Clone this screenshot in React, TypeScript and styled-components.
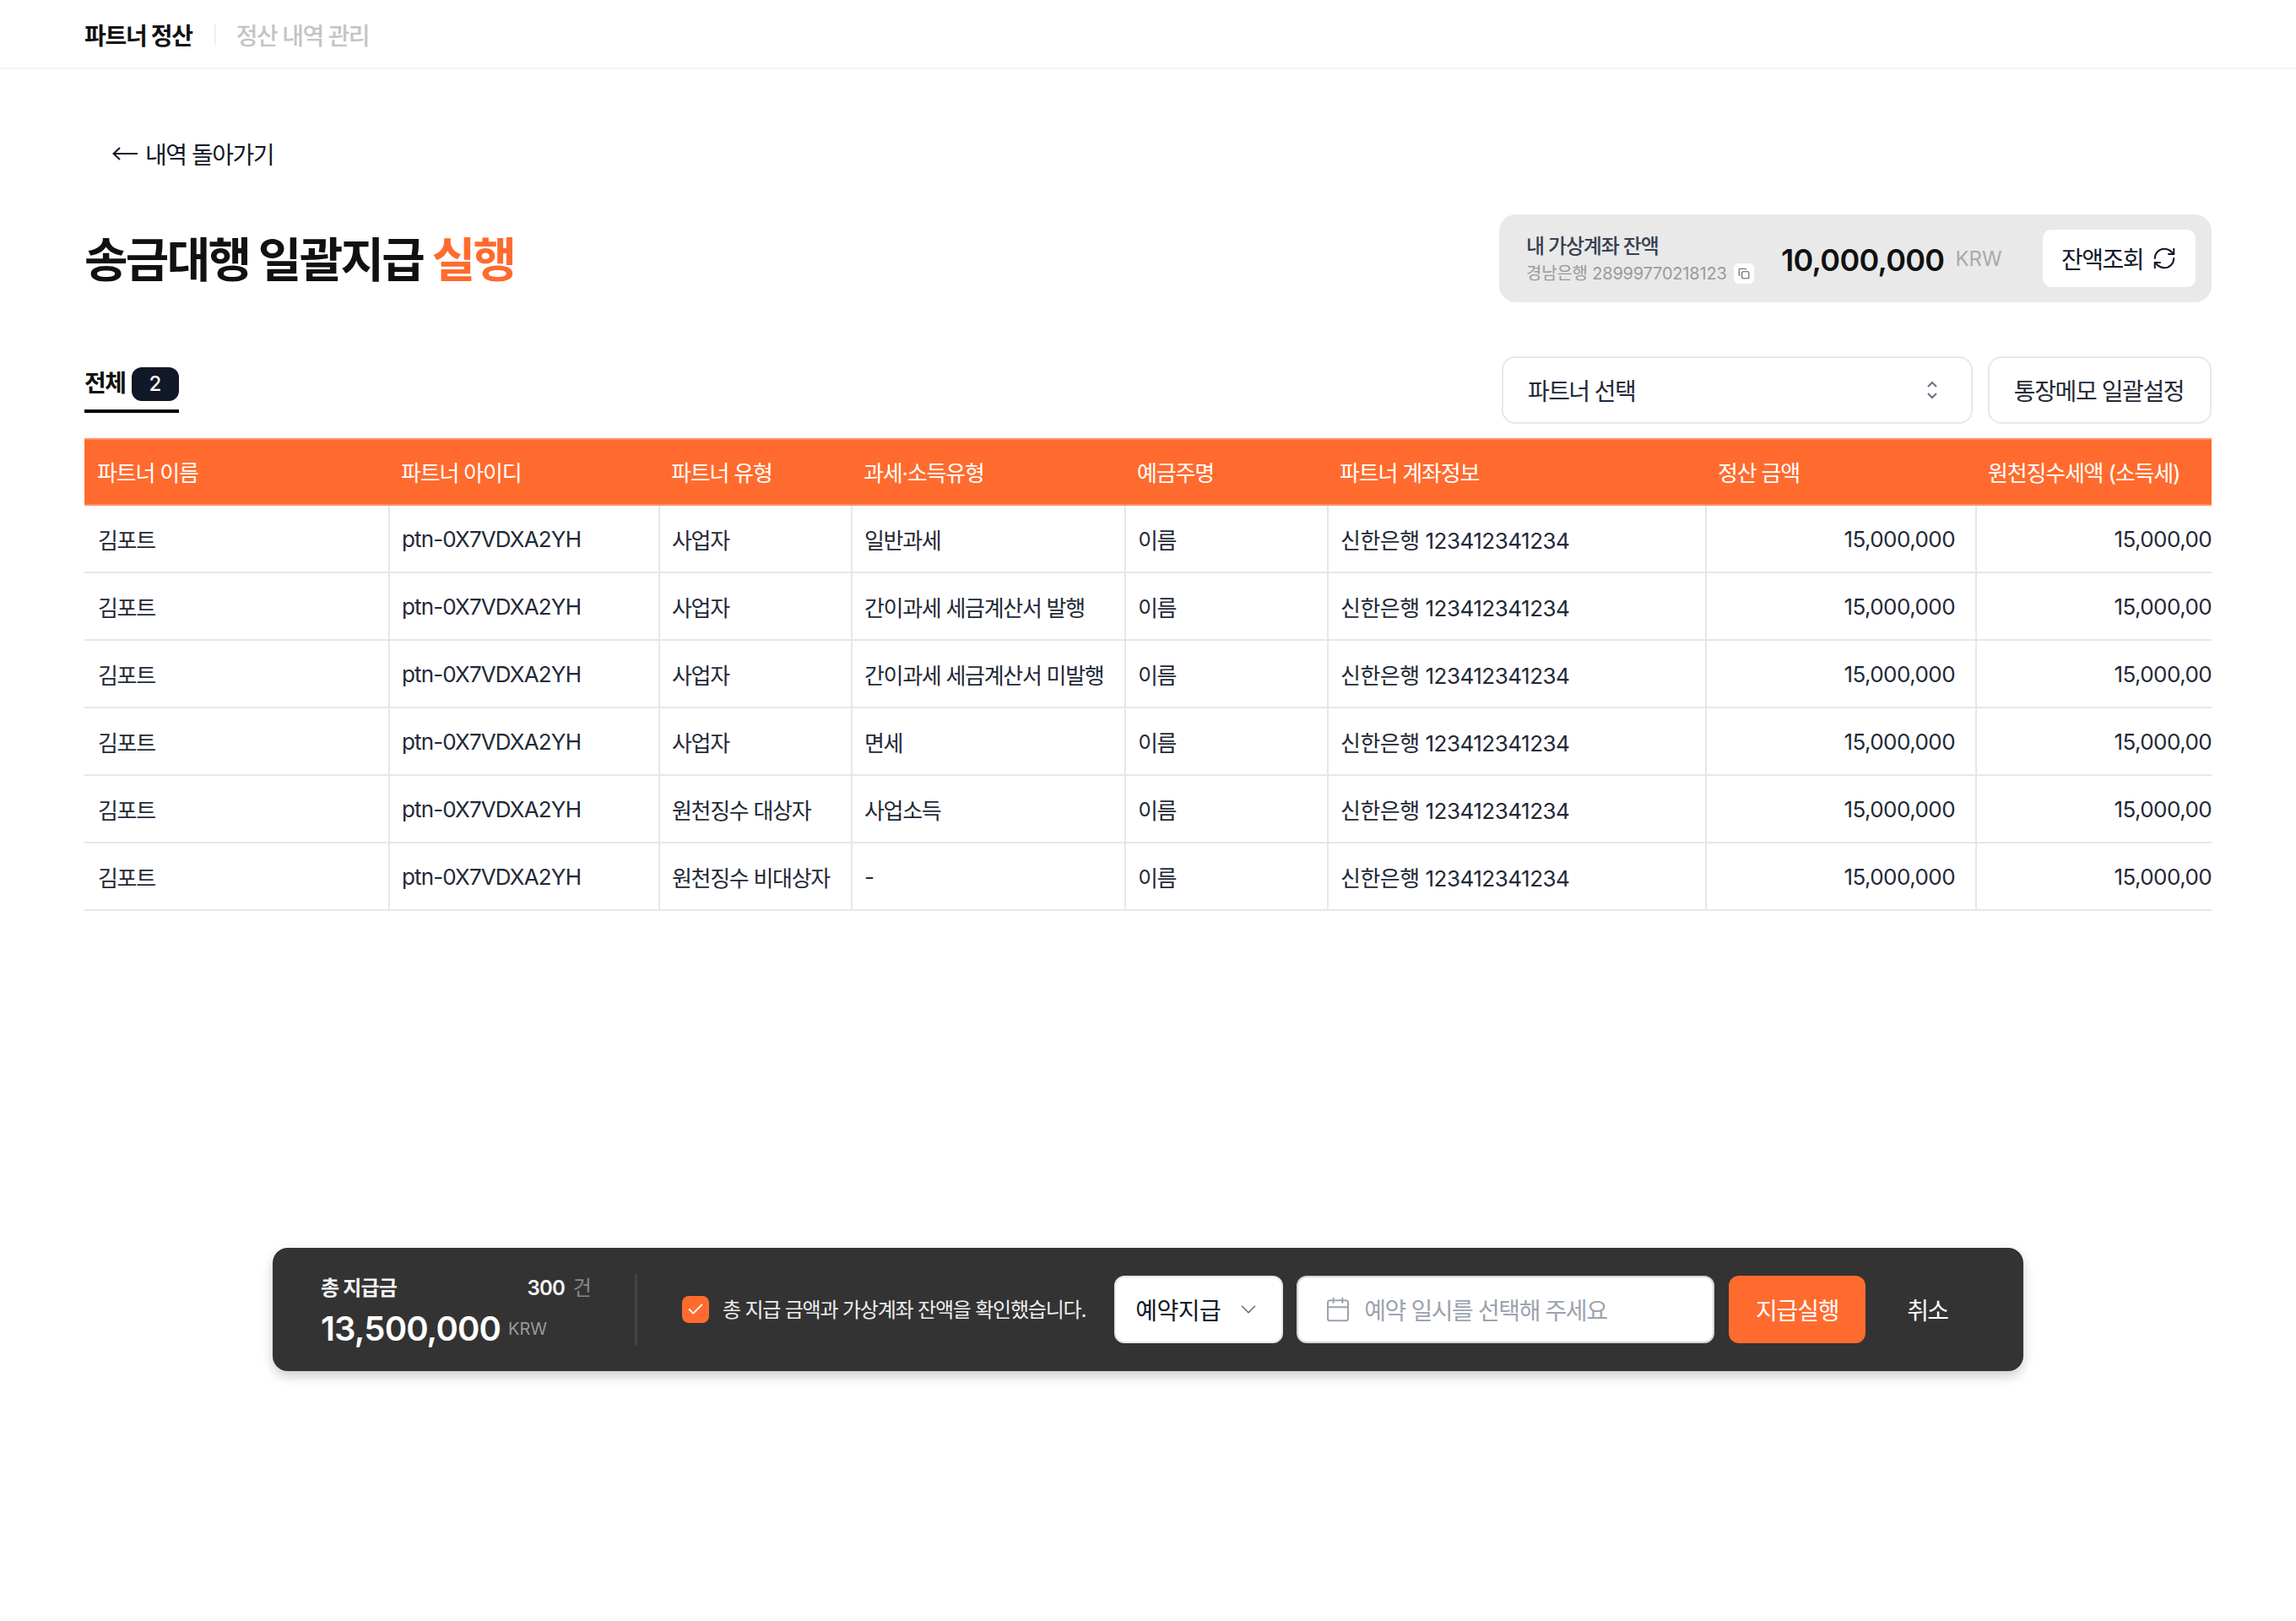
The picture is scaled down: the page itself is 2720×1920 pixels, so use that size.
import React from "react";
import styled, { createGlobalStyle } from "styled-components";
import { Calendar, Check, ChevronDown, Copy, RefreshCw } from "lucide-react";

const ORANGE = "#ff6b2e";

const GlobalStyle = createGlobalStyle`
    html, body {
        margin: 0;
        padding: 0;
        background: #fff;
    }
    body {
        font-family: Inter, "Noto Sans CJK KR", sans-serif;
        color: #111827;
    }
    * {
        box-sizing: border-box;
    }
`;

const Page = styled.div`
    width: 2720px;
    height: 1920px;
    display: flex;
    flex-direction: column;
    overflow: hidden;
`;

const TopBar = styled.header`
    height: 82px;
    padding: 2px 100px 0;
    display: flex;
    align-items: center;
    border-bottom: 2px solid #f5f5f5;
`;

const TopTitle = styled.span`
    font-size: 28px;
    font-weight: 700;
    letter-spacing: -1.3px;
    color: #111;
`;

const TopDivider = styled.span`
    width: 2px;
    height: 24px;
    margin: 0 24px 0 26px;
    background: #eee;
`;

const TopSub = styled.span`
    font-size: 28px;
    font-weight: 500;
    letter-spacing: -1.5px;
    color: #c4c4c4;
`;

const Main = styled.main`
    padding: 0 100px;
    display: flex;
    flex-direction: column;
`;

const BackLink = styled.a`
    height: 40px;
    margin: 80px 0 0 33px;
    display: flex;
    align-items: center;
    gap: 9px;
    font-size: 28px;
    letter-spacing: -1.5px;
    color: #111827;
`;

const TitleRow = styled.div`
    margin-top: 52px;
    display: flex;
    align-items: center;
    justify-content: space-between;
`;

const Title = styled.h1`
    margin: 0 0 6px;
    font-size: 56px;
    font-weight: 700;
    letter-spacing: -2.7px;
    color: #111;

    em {
        font-style: normal;
        color: ${ORANGE};
    }
`;

const BalanceCard = styled.div`
    width: 844px;
    height: 104px;
    padding: 0 19px 0 32px;
    display: flex;
    align-items: center;
    border-radius: 20px;
    background: #e9e9e9;
`;

const AccountInfo = styled.div`
    width: 302px;
    display: flex;
    flex-direction: column;
    gap: 2px;
`;

const AccountLabel = styled.div`
    font-size: 24px;
    line-height: 34px;
    font-weight: 500;
    letter-spacing: -1.2px;
    color: #374151;
`;

const AccountNumber = styled.div`
    display: flex;
    align-items: center;
    font-size: 20px;
    line-height: 26px;
    color: #9a9a9a;
    letter-spacing: -0.2px;
    gap: 8px;
`;

const CopyChip = styled.span`
    width: 24px;
    height: 24px;
    display: flex;
    align-items: center;
    justify-content: center;
    border-radius: 6px;
    background: #fff;
    color: #555;
`;

const BalanceAmount = styled.span`
    padding-top: 3px;
    font-size: 36px;
    font-weight: 600;
    letter-spacing: -0.7px;
    color: #111;
`;

const Currency = styled.span<{ $size: number; $color: string; $lift?: number }>`
    margin-left: ${p => p.$size === 24 ? 13 : 9}px;
    font-size: ${p => p.$size}px;
    font-weight: 400;
    letter-spacing: 0;
    vertical-align: ${p => p.$lift ?? 0}px;
    color: ${p => p.$color};
`;

const RefreshButton = styled.button`
    width: 181px;
    height: 68px;
    margin-left: auto;
    padding: 0;
    display: flex;
    align-items: center;
    justify-content: center;
    gap: 10px;
    border: 0;
    border-radius: 10px;
    background: #fff;
    font: inherit;
    font-size: 28px;
    letter-spacing: -1.5px;
    color: #111827;
`;

const TabRow = styled.div`
    margin-top: 64px;
    height: 80px;
    display: flex;
    align-items: flex-start;
`;

const Tab = styled.div`
    width: 112px;
    height: 67px;
    margin-right: auto;
    padding-top: 13px;
    display: flex;
    align-items: flex-start;
    justify-content: space-between;
    border-bottom: 4px solid #000;
    font-size: 28px;
    line-height: 38px;
    font-weight: 700;
    letter-spacing: -1.6px;
    color: #111;
    white-space: nowrap;
`;

const TabCount = styled.span`
    width: 56px;
    height: 40px;
    display: flex;
    align-items: center;
    justify-content: center;
    border-radius: 12px;
    background: #111827;
    color: #fff;
    font-size: 24px;
    font-weight: 500;
    letter-spacing: 0;
`;

const PartnerSelect = styled.div`
    width: 558px;
    height: 80px;
    padding: 0 38px 0 29px;
    display: flex;
    align-items: center;
    justify-content: space-between;
    border: 2px solid #e8e8e8;
    border-radius: 16px;
    font-size: 28px;
    letter-spacing: -1.6px;
    color: #1f2937;
`;

const MemoButton = styled.button`
    width: 265px;
    height: 80px;
    margin-left: 18px;
    padding: 0 2px 0 0;
    border: 2px solid #e8e8e8;
    border-radius: 16px;
    background: #fff;
    font: inherit;
    font-size: 28px;
    letter-spacing: -1.4px;
    color: #1f2937;
`;

const TableClip = styled.div`
    margin-top: 17px;
    width: 2520px;
    overflow: hidden;
`;

const Table = styled.table`
    width: 2560px;
    table-layout: fixed;
    border-collapse: separate;
    border-spacing: 0;
`;

const HeadCell = styled.th`
    height: 80px;
    padding: 0 15px 2px;
    background: ${ORANGE};
    border-top: 2px solid #fb9068;
    border-bottom: 2px solid #fb9068;
    color: #fff;
    font-size: 26px;
    font-weight: 400;
    letter-spacing: -1.2px;
    text-align: left;
    white-space: nowrap;
`;

const Cell = styled.td<{ $right?: boolean; $spacing?: number }>`
    height: 80px;
    padding: ${p => p.$right ? "0 24px 0 0" : "0 0 0 14px"};
    border-bottom: 2px solid #e5e7eb;
    border-left: 2px solid #e5e7eb;
    font-size: 26px;
    letter-spacing: ${p => p.$spacing ?? -1.3}px;
    color: #1f2937;
    text-align: ${p => p.$right ? "right" : "left"};
    white-space: nowrap;

    &:first-child {
        border-left: 0;
        padding-left: 16px;
    }
`;

const ActionBar = styled.div`
    width: 2074px;
    height: 146px;
    margin: 399px auto 0;
    padding: 0 56px 0 57px;
    display: flex;
    align-items: center;
    border-radius: 18px;
    background: #333;
    box-shadow: 0 6px 14px rgba(0, 0, 0, 0.2);
`;

const TotalBlock = styled.div`
    width: 320px;
    padding-top: 9px;
    display: flex;
    flex-direction: column;
`;

const TotalTop = styled.div`
    display: flex;
    align-items: center;
    justify-content: space-between;
    font-size: 24px;
    line-height: 32px;
    font-weight: 600;
    letter-spacing: -0.9px;
    color: #f3f3f3;

    small {
        margin-left: 10px;
        font-size: 24px;
        font-weight: 400;
        color: #888;
    }
`;

const TotalBottom = styled.div`
    margin-top: 4px;
    font-size: 40px;
    line-height: 56px;
    font-weight: 600;
    letter-spacing: -0.85px;
    color: #fff;
`;

const BarDivider = styled.span`
    width: 3px;
    height: 84px;
    margin: 0 53px 0 52px;
    background: #444;
`;

const Confirm = styled.label`
    display: flex;
    align-items: center;
    gap: 16px;
    font-size: 24px;
    letter-spacing: -1.2px;
    color: #eee;
    white-space: nowrap;
`;

const ConfirmText = styled.span`
    margin-bottom: 3px;
`;

const CheckBox = styled.span`
    width: 32px;
    height: 32px;
    display: flex;
    align-items: center;
    justify-content: center;
    border-radius: 8px;
    background: ${ORANGE};
    color: #fff;
`;

const PayType = styled.div`
    width: 200px;
    height: 80px;
    margin-left: 34px;
    padding: 0 24px 0 23px;
    display: flex;
    align-items: center;
    justify-content: space-between;
    border: 2px solid #e5e7eb;
    border-radius: 12px;
    background: #fff;
    font-size: 28px;
    letter-spacing: -0.5px;
    color: #111827;
`;

const DateInput = styled.div`
    width: 495px;
    height: 80px;
    margin-left: 16px;
    padding: 0 0 0 31px;
    display: flex;
    align-items: center;
    gap: 15px;
    border: 2px solid #d1d5db;
    border-radius: 12px;
    background: #fff;
    font-size: 28px;
    letter-spacing: -1.4px;
    color: #9ca3af;
`;

const PayButton = styled.button`
    width: 162px;
    height: 80px;
    margin-left: 17px;
    padding: 0;
    border: 0;
    border-radius: 12px;
    background: ${ORANGE};
    font: inherit;
    font-size: 28px;
    letter-spacing: -1.2px;
    color: #fff;
`;

const CancelButton = styled.button`
    margin-left: 49px;
    padding: 0;
    border: 0;
    background: none;
    font: inherit;
    font-size: 28px;
    letter-spacing: -1.6px;
    color: #fff;
`;

const COLUMNS = [
    { title: "파트너 이름", width: 360 },
    { title: "파트너 아이디", width: 320 },
    { title: "파트너 유형", width: 228 },
    { title: "과세·소득유형", width: 324 },
    { title: "예금주명", width: 240 },
    { title: "파트너 계좌정보", width: 448 },
    { title: "정산 금액", width: 320 },
    { title: "원천징수세액 (소득세)", width: 320 },
];

const ROWS = [
    { type: "사업자", tax: "일반과세" },
    { type: "사업자", tax: "간이과세 세금계산서 발행" },
    { type: "사업자", tax: "간이과세 세금계산서 미발행" },
    { type: "사업자", tax: "면세" },
    { type: "원천징수 대상자", tax: "사업소득" },
    { type: "원천징수 비대상자", tax: "-" },
];

export default function App() {
    return (
        <Page>
            <GlobalStyle />
            <TopBar>
                <TopTitle>파트너 정산</TopTitle>
                <TopDivider />
                <TopSub>정산 내역 관리</TopSub>
            </TopBar>
            <Main>
                <BackLink>
                    <svg width="30" height="20" viewBox="0 0 30 20" fill="none" stroke="#111827" strokeWidth="2">
                        <path d="M1 10H30M9 3L1.5 10L9 17" />
                    </svg>
                    내역 돌아가기
                </BackLink>
                <TitleRow>
                    <Title>송금대행 일괄지급 <em>실행</em></Title>
                    <BalanceCard>
                        <AccountInfo>
                            <AccountLabel>내 가상계좌 잔액</AccountLabel>
                            <AccountNumber>
                                경남은행 28999770218123
                                <CopyChip><Copy size={14} strokeWidth={1.8} /></CopyChip>
                            </AccountNumber>
                        </AccountInfo>
                        <BalanceAmount>10,000,000</BalanceAmount>
                        <Currency $size={24} $color="#aaa">KRW</Currency>
                        <RefreshButton>잔액조회 <RefreshCw size={30} strokeWidth={1.6} /></RefreshButton>
                    </BalanceCard>
                </TitleRow>
                <TabRow>
                    <Tab>전체 <TabCount>2</TabCount></Tab>
                    <PartnerSelect>
                        파트너 선택
                        <svg width="16" height="24" viewBox="0 0 16 24" fill="none" stroke="#6b7280" strokeWidth="2">
                            <path d="M3 8L8 3L13 8M3 16L8 21L13 16" />
                        </svg>
                    </PartnerSelect>
                    <MemoButton>통장메모 일괄설정</MemoButton>
                </TabRow>
                <TableClip>
                    <Table>
                        <colgroup>
                            {COLUMNS.map(col => <col key={col.title} width={col.width} />)}
                        </colgroup>
                        <thead>
                            <tr>
                                {COLUMNS.map(col => <HeadCell key={col.title}>{col.title}</HeadCell>)}
                            </tr>
                        </thead>
                        <tbody>
                            {ROWS.map((row, i) => <tr key={i}>
                                <Cell>김포트</Cell>
                                <Cell $spacing={-0.85}>ptn-0X7VDXA2YH</Cell>
                                <Cell>{row.type}</Cell>
                                <Cell>{row.tax}</Cell>
                                <Cell>이름</Cell>
                                <Cell $spacing={-0.5}>신한은행 123412341234</Cell>
                                <Cell $right $spacing={-0.55}>15,000,000</Cell>
                                <Cell $right $spacing={-0.55}>15,000,000</Cell>
                            </tr>)}
                        </tbody>
                    </Table>
                </TableClip>
                <ActionBar>
                    <TotalBlock>
                        <TotalTop>
                            <span>총 지급금</span>
                            <span>300<small>건</small></span>
                        </TotalTop>
                        <TotalBottom>
                            13,500,000<Currency $size={20} $color="#999" $lift={7}>KRW</Currency>
                        </TotalBottom>
                    </TotalBlock>
                    <BarDivider />
                    <Confirm>
                        <CheckBox><Check size={22} strokeWidth={2} /></CheckBox>
                        <ConfirmText>총 지급 금액과 가상계좌 잔액을 확인했습니다.</ConfirmText>
                    </Confirm>
                    <PayType>
                        예약지급
                        <ChevronDown size={30} strokeWidth={1.4} color="#6b7280" />
                    </PayType>
                    <DateInput>
                        <Calendar size={32} strokeWidth={1.5} />
                        예약 일시를 선택해 주세요
                    </DateInput>
                    <PayButton>지급실행</PayButton>
                    <CancelButton>취소</CancelButton>
                </ActionBar>
            </Main>
        </Page>
    );
}
